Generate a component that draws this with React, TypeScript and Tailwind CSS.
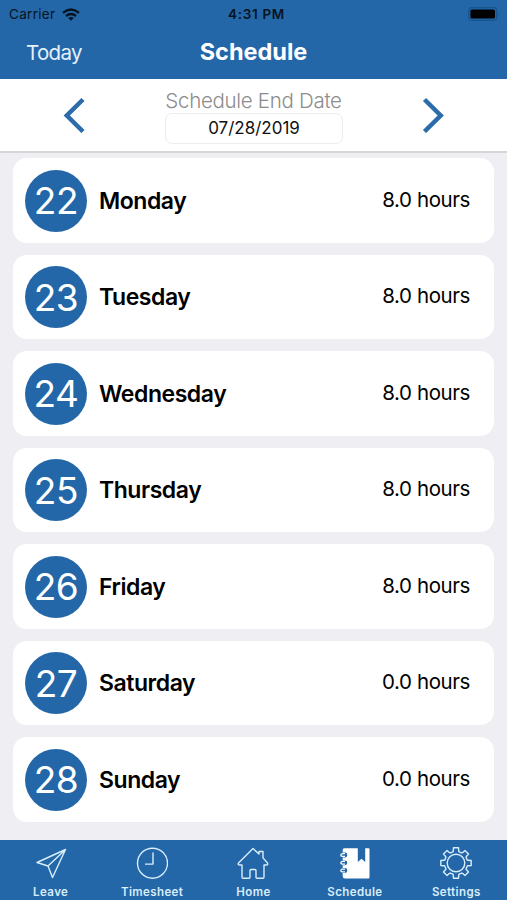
import type { ReactNode } from "react";

interface Shift {
  date: number;
  day: string;
  hours: string;
}

const shifts: Shift[] = [
  { date: 22, day: "Monday", hours: "8.0" },
  { date: 23, day: "Tuesday", hours: "8.0" },
  { date: 24, day: "Wednesday", hours: "8.0" },
  { date: 25, day: "Thursday", hours: "8.0" },
  { date: 26, day: "Friday", hours: "8.0" },
  { date: 27, day: "Saturday", hours: "0.0" },
  { date: 28, day: "Sunday", hours: "0.0" },
];

// Eight-toothed cog outline around (16, 16)
const gearPath = (() => {
  const profile = [
    [-15.5, 11.6],
    [-13, 12.2],
    [-9.5, 15.4],
    [9.5, 15.4],
    [13, 12.2],
    [15.5, 11.6],
  ];
  const points: string[] = [];
  for (let tooth = 0; tooth < 8; tooth++) {
    for (const [offset, r] of profile) {
      const a = ((tooth * 45 + offset) * Math.PI) / 180;
      points.push(`${(16 + r * Math.sin(a)).toFixed(2)} ${(16 - r * Math.cos(a)).toFixed(2)}`);
    }
  }
  return `M${points.join("L")}Z`;
})();

function TabIcon({ children }: { children: ReactNode }) {
  return (
    <svg
      width="32"
      height="32"
      viewBox="0 0 32 32"
      fill="none"
      stroke="#d9edfb"
      strokeWidth="1.4"
      strokeLinejoin="round"
    >
      {children}
    </svg>
  );
}

const tabs = [
  {
    label: "Leave",
    icon: (
      <TabIcon>
        <path d="M30.5 2.5L2 15.5l11 3.5 4.5 11.5zM30 3L13 19" />
      </TabIcon>
    ),
  },
  {
    label: "Timesheet",
    icon: (
      <TabIcon>
        <circle cx="16.5" cy="16.2" r="15" />
        <path d="M17 5.5v11.6H9" />
      </TabIcon>
    ),
  },
  {
    label: "Home",
    icon: (
      <TabIcon>
        <path d="M16 1.6L1.5 16q-1 2 1.2 2H5v12q0 1.2 1.2 1.2H12q1 0 1-1v-6.7q0-1 1-1h4q1 0 1 1v6.7q0 1 1 1h5.8q1.2 0 1.2-1.2V18h2.3q2.2 0 1.2-2L26 10.9V4.5h-4V7z" />
      </TabIcon>
    ),
  },
  {
    label: "Schedule",
    icon: (
      <TabIcon>
        <path
          d="M5.2 1.2H18.8V15l3.7-3.2 3.7 3.2V1.2H29.5q1 0 1 1v28.2q0 1-1 1H6q-2.3 0-2.3-2.5V3q0-1.8 1.5-1.8z"
          fill="white"
          stroke="none"
        />
        {[7.5, 15.3, 23].map((y) => (
          <g key={y}>
            <path d={`M1 ${y - 1.9}h5a2.3 2.4 0 0 1 0 4.8H1z`} fill="#2367a8" stroke="none" />
            <path d={`M6 ${y - 0.9}H3.3q-1.5 .2-1.5 1.4t1.5 1.4H6`} stroke="white" strokeWidth="1.3" />
          </g>
        ))}
      </TabIcon>
    ),
  },
  {
    label: "Settings",
    icon: (
      <TabIcon>
        <path d={gearPath} />
        <circle cx="16" cy="16" r="8.8" />
      </TabIcon>
    ),
  },
];

function StatusBar() {
  return (
    <div className="grid h-[28px] grid-cols-3 items-center pl-[9px] pr-[7px] text-[#061321]">
      <div className="flex items-center gap-[7px]">
        <span className="text-[13.5px] tracking-[0.3px]">Carrier</span>
        <svg width="18" height="13" viewBox="0 0 18 13" fill="none" stroke="currentColor" strokeWidth="2.3">
          <path d="M1 4.8q8-6.6 16 0M4 8q5-4 10 0" />
          <path d="M6.2 10q2.8-2.1 5.6 0L9 12.8z" fill="currentColor" stroke="none" />
        </svg>
      </div>
      <span className="pl-1 text-center text-[13.5px] font-semibold tracking-[0.7px]">4:31 PM</span>
      <svg className="mb-px justify-self-end" width="32" height="14" viewBox="0 0 32 14">
        <rect x="0.7" y="0.7" width="28" height="12.6" rx="3.2" fill="none" stroke="#17548e" strokeWidth="1.2" />
        <rect x="2.4" y="2.4" width="24.6" height="9.2" rx="1.6" fill="black" />
        <path d="M30.2 5q1.6 2 0 4z" fill="#17548e" />
      </svg>
    </div>
  );
}

function ShiftCard({ date, day, hours }: Shift) {
  return (
    <li className="flex h-[84.5px] items-center rounded-[14px] bg-white pl-3 pr-6 pt-px text-black">
      <div className="flex size-[62px] items-center justify-center rounded-full bg-[#2367a8] text-[37px] tracking-[-0.4px] text-white">
        {date}
      </div>
      <span className="ml-3 text-[23px] font-semibold tracking-[-0.45px]">{day}</span>
      <span className="ml-auto pb-px text-[20.5px] tracking-[-0.4px]">{hours} hours</span>
    </li>
  );
}

export default function App() {
  return (
    <div className="flex h-[900px] w-[507px] flex-col overflow-hidden bg-[#efeef3] font-[Inter,sans-serif]">
      <header className="h-[79px] shrink-0 bg-[#2367a8]">
        <StatusBar />
        <div className="grid grid-cols-3 items-start pt-[7px] text-white">
          <button className="pl-[26px] pt-[2px] text-left text-[20.5px] leading-8 tracking-[-0.7px] text-[#e4f1fc]">
            Today
          </button>
          <h1 className="pt-px text-center text-[23.5px] leading-8 font-bold">Schedule</h1>
        </div>
      </header>

      <div className="flex h-[74px] shrink-0 items-center justify-between border-b-2 border-[#d6d6d8] bg-white px-[63px]">
        <button aria-label="Previous week">
          <svg width="22" height="36" viewBox="0 0 22 36" fill="none" stroke="#2c6cab" strokeWidth="4.5">
            <path d="M20 2.5L3.8 18.5 20 34.5" />
          </svg>
        </button>
        <div className="flex flex-col items-center pt-[2px]">
          <span className="text-[20.5px] leading-6 font-light tracking-[-0.3px] text-[#8c8c8c]">
            Schedule End Date
          </span>
          <div className="h-[31px] w-[178px] rounded-[7px] border border-[#ececec] pl-px text-center text-[17px] leading-[29px] text-[#111]">
            07/28/2019
          </div>
        </div>
        <button aria-label="Next week">
          <svg width="22" height="36" viewBox="0 0 22 36" fill="none" stroke="#2c6cab" strokeWidth="4.5">
            <path d="M2.5 2.5l16.2 16-16.2 16" />
          </svg>
        </button>
      </div>

      <ul className="flex flex-1 flex-col gap-3 px-[13px] pt-[5px]">
        {shifts.map((shift) => (
          <ShiftCard key={shift.date} {...shift} />
        ))}
      </ul>

      <nav className="grid h-[60px] shrink-0 grid-cols-5 bg-[#2367a8] pt-[7px]">
        {tabs.map(({ label, icon }) => (
          <button key={label} className="flex flex-col items-center gap-[5px]">
            {icon}
            <span className="text-[11.5px] leading-4 font-semibold tracking-[0.4px] text-[#d9edfb]">{label}</span>
          </button>
        ))}
      </nav>
    </div>
  );
}
